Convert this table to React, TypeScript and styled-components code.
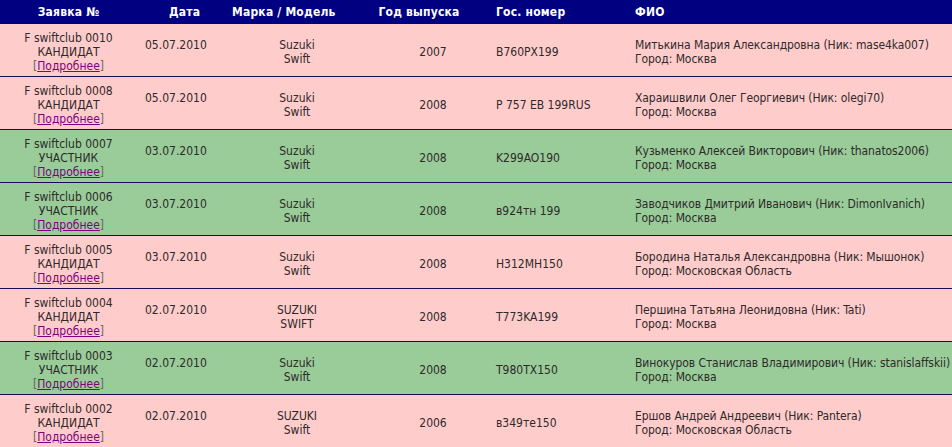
import React from "react";
import styled, { createGlobalStyle } from "styled-components";

const Global = createGlobalStyle`
  html, body { margin: 0; padding: 0; background: #fff; }
  body { font-family: "DejaVu Sans Condensed", "DejaVu Sans", sans-serif; font-size: 12px; color: #2e2a2a; }
`;

const COLS = "137px 95px 130px 128px 140px 1fr";

const Table = styled.div`
  width: 952px;
  display: flex;
  flex-direction: column;
`;

const HeaderRow = styled.div`
  display: grid;
  grid-template-columns: ${COLS};
  height: 24px;
  background: #000080;
  color: #fff;
  font-weight: bold;
  align-items: center;
  letter-spacing: 0.2px;
`;

const HeadCell = styled.div<{ $align?: string; $pl?: number; $pr?: number }>`
  text-align: ${(p) => p.$align || "center"};
  padding-left: ${(p) => p.$pl || 0}px;
  padding-right: ${(p) => p.$pr || 0}px;
  white-space: nowrap;
`;

const Row = styled.div<{ $member: boolean }>`
  display: grid;
  grid-template-columns: ${COLS};
  box-sizing: content-box;
  height: 48px;
  padding-top: 4px;
  background: ${(p) => (p.$member ? "#99cc99" : "#ffcccc")};
  border-bottom: 1px solid #1c0a55;
  line-height: 14px;
`;

const Cell = styled.div<{ $align?: string; $pl?: number; $pr?: number; $pb?: number; $tight?: boolean }>`
  display: flex;
  flex-direction: column;
  justify-content: center;
  text-align: ${(p) => p.$align || "left"};
  padding-left: ${(p) => p.$pl || 0}px;
  padding-right: ${(p) => p.$pr || 0}px;
  padding-bottom: ${(p) => p.$pb || 0}px;
  letter-spacing: ${(p) => (p.$tight ? "-0.08px" : "normal")};
  white-space: nowrap;
`;

const Bracket = styled.span`
  color: #666;
`;

const More = styled.a`
  color: #800080;
  text-decoration: underline;
`;

type Entry = {
  num: string;
  member: boolean;
  date: string;
  make: string;
  model: string;
  year: string;
  plate: string;
  name: string;
  city: string;
};

const data: Entry[] = [
  { num: "0010", member: false, date: "05.07.2010", make: "Suzuki", model: "Swift", year: "2007", plate: "B760PX199", name: "Митькина Мария Александровна (Ник: mase4ka007)", city: "Москва" },
  { num: "0008", member: false, date: "05.07.2010", make: "Suzuki", model: "Swift", year: "2008", plate: "P 757 EB 199RUS", name: "Хараишвили Олег Георгиевич (Ник: olegi70)", city: "Москва" },
  { num: "0007", member: true, date: "03.07.2010", make: "Suzuki", model: "Swift", year: "2008", plate: "K299AO190", name: "Кузьменко Алексей Викторович (Ник: thanatos2006)", city: "Москва" },
  { num: "0006", member: true, date: "03.07.2010", make: "Suzuki", model: "Swift", year: "2008", plate: "в924тн 199", name: "Заводчиков Дмитрий Иванович (Ник: DimonIvanich)", city: "Москва" },
  { num: "0005", member: false, date: "03.07.2010", make: "Suzuki", model: "Swift", year: "2008", plate: "H312MH150", name: "Бородина Наталья Александровна (Ник: Мышонок)", city: "Московская Область" },
  { num: "0004", member: false, date: "02.07.2010", make: "SUZUKI", model: "SWIFT", year: "2008", plate: "T773KA199", name: "Першина Татьяна Леонидовна (Ник: Tati)", city: "Москва" },
  { num: "0003", member: true, date: "02.07.2010", make: "Suzuki", model: "Swift", year: "2008", plate: "T980TX150", name: "Винокуров Станислав Владимирович (Ник: stanislaffskii)", city: "Москва" },
  { num: "0002", member: false, date: "02.07.2010", make: "SUZUKI", model: "Swift", year: "2006", plate: "в349те150", name: "Ершов Андрей Андреевич (Ник: Pantera)", city: "Московская Область" },
];

export default function App() {
  return (
    <>
      <Global />
      <Table>
        <HeaderRow>
          <HeadCell>Заявка №</HeadCell>
          <HeadCell>Дата</HeadCell>
          <HeadCell $pr={30}>Марка / Модель</HeadCell>
          <HeadCell $pr={14}>Год выпуска</HeadCell>
          <HeadCell $align="left" $pl={6}>Гос. номер</HeadCell>
          <HeadCell $align="left" $pl={5}>ФИО</HeadCell>
        </HeaderRow>
        {data.map((d) => (
          <Row key={d.num} $member={d.member}>
            <Cell $align="center">
              <div>F swiftclub {d.num}</div>
              <div>{d.member ? "УЧАСТНИК" : "КАНДИДАТ"}</div>
              <div>
                <Bracket>[</Bracket>
                <More href="#">Подробнее</More>
                <Bracket>]</Bracket>
              </div>
            </Cell>
            <Cell $pl={8} $pb={14}>{d.date}</Cell>
            <Cell $align="center">
              <div>{d.make}</div>
              <div>{d.model}</div>
            </Cell>
            <Cell $align="center" $pl={14}>{d.year}</Cell>
            <Cell $pl={6}>{d.plate}</Cell>
            <Cell $pl={5} $tight>
              <div>{d.name}</div>
              <div>Город: {d.city}</div>
            </Cell>
          </Row>
        ))}
      </Table>
    </>
  );
}
